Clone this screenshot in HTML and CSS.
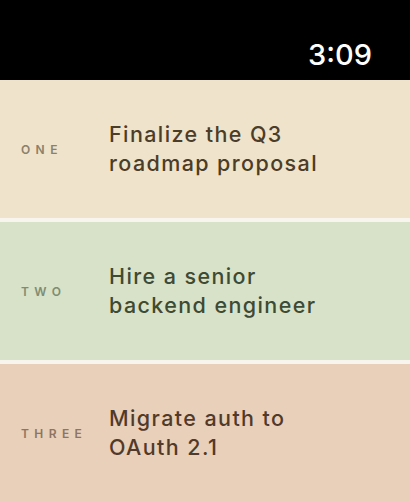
FILE: index.html
```html
<!DOCTYPE html>
<html lang="en">
<head>
  <meta charset="UTF-8">
  <meta name="viewport" content="width=device-width, initial-scale=1.0">
  <title>Priorities</title>
  <link rel="stylesheet" href="styles.css">
</head>
<body>
  <div class="status-bar">
    <span class="time">3:09</span>
  </div>
  <div class="list">
    <div class="item item-one">
      <span class="label">One</span>
      <span class="title">Finalize the Q3 roadmap proposal</span>
    </div>
    <div class="item item-two">
      <span class="label">Two</span>
      <span class="title">Hire a senior backend engineer</span>
    </div>
    <div class="item item-three">
      <span class="label">Three</span>
      <span class="title">Migrate auth to OAuth 2.1</span>
    </div>
  </div>
</body>
</html>
```

FILE: styles.css
```css
body {
  margin: 0;
  font-family: Inter, "Noto Sans", sans-serif;
  background-color: #f8f5ee;
}

.status-bar {
  height: 80px;
  box-sizing: border-box;
  background-color: #000;
  display: flex;
  justify-content: flex-end;
  padding: 40px 38px 0 0;
}

.time {
  color: #fff;
  font-size: 29px;
  font-weight: 500;
  line-height: 1;
}

.list {
  display: flex;
  flex-direction: column;
  gap: 4px;
}

.item {
  height: 138px;
  display: flex;
  align-items: center;
  padding-left: 21px;
}

.label {
  width: 88px;
  flex-shrink: 0;
  font-size: 12px;
  font-weight: 600;
  letter-spacing: 0.45em;
  text-transform: uppercase;
}

.title {
  width: 232px;
  font-size: 21.5px;
  font-weight: 500;
  line-height: 29px;
  letter-spacing: 0.065em;
}

.item-one {
  background-color: #efe3cb;
}

.item-one .label {
  color: #8b806a;
}

.item-one .title {
  color: #4b3d28;
}

.item-two {
  background-color: #d8e2c8;
}

.item-two .label {
  color: #7f8c73;
}

.item-two .title {
  color: #3e4a33;
}

.item-three {
  background-color: #e8d0ba;
}

.item-three .label {
  color: #8e7462;
}

.item-three .title {
  color: #523a2a;
}
```
